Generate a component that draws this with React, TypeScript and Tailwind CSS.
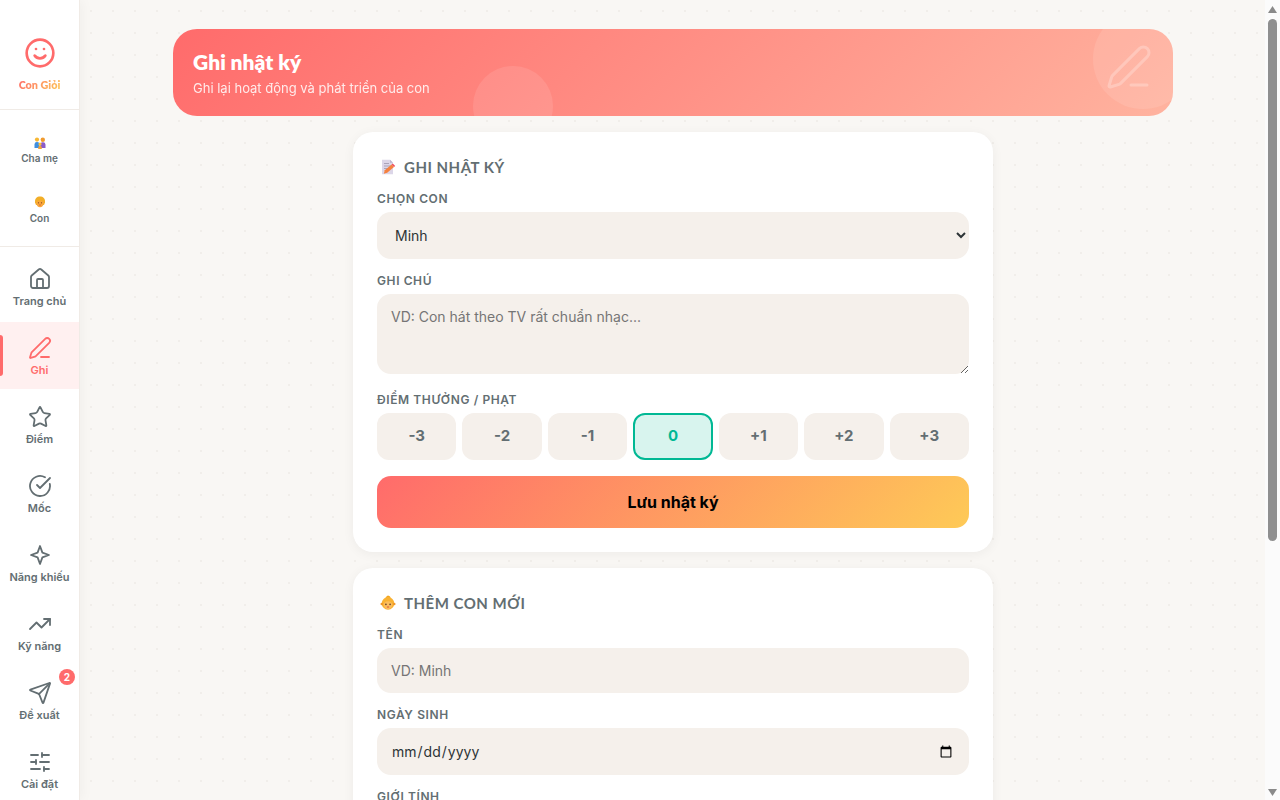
import { CircleCheckBig, House, PenLine, Send, SlidersHorizontal, Smile, Star, TrendingUp } from "lucide-react";
import type { ComponentType, ReactNode } from "react";

type IconProps = { size?: number; strokeWidth?: number };

/* lucide's sparkle is wider than the one in the picture */
function FourPointStar({ size = 24, strokeWidth = 2 }: IconProps) {
  return (
    <svg width={size} height={size} viewBox="0 0 24 24" fill="none" stroke="currentColor" strokeWidth={strokeWidth} strokeLinejoin="round">
      <path d="M12 3l2.400 6.600L21 12l-6.600 2.400L12 21l-2.400-6.600L3 12l6.600-2.400Z" />
    </svg>
  );
}

const navItems: { label: string; icon: ComponentType<IconProps>; active?: boolean; badge?: number }[] = [
  { label: "Trang chủ", icon: House },
  { label: "Ghi", icon: PenLine, active: true },
  { label: "Điểm", icon: Star },
  { label: "Mốc", icon: CircleCheckBig },
  { label: "Năng khiếu", icon: FourPointStar },
  { label: "Kỹ năng", icon: TrendingUp },
  { label: "Đề xuất", icon: Send, badge: 2 },
  { label: "Cài đặt", icon: SlidersHorizontal },
];

const points = ["-3", "-2", "-1", "0", "+1", "+2", "+3"];

const heading = "font-['Lato','Noto_Sans',sans-serif]";
const fieldLabel = "mb-1.5 block text-[12px] leading-[15px] font-semibold tracking-[0.6px] text-[#636e72] uppercase";
const field = "w-full rounded-[14px] bg-[#f5f0eb] px-[14px] text-[14px] text-[#2d3436] outline-none placeholder:text-[#757575]";
const primaryButton = "mt-4 h-[52px] w-full rounded-[14px] bg-[linear-gradient(135deg,#ff6b6b,#feca57)] text-[16px] font-bold text-black";

/* emoji in the reference are a colour set we don't have, so small drawings */
function FamilyEmoji() {
  return (
    <svg width="12" height="12" viewBox="0 0 12 12">
      <circle cx="3" cy="2.600" r="2.100" fill="#f7b733" />
      <path d="M.5 11V7.200A2.400 2.400 0 0 1 3 5a2.400 2.400 0 0 1 2.500 2.200V11Z" fill="#3f8fe0" />
      <circle cx="8.800" cy="2.800" r="2.200" fill="#f09a2e" />
      <path d="M6.200 11V7.400A2.500 2.500 0 0 1 8.800 5.200a2.500 2.500 0 0 1 2.700 2.200V11Z" fill="#8a5cc9" />
      <circle cx="6" cy="7" r="1.600" fill="#f9c23c" />
      <path d="M4.200 12V10.400A1.800 1.800 0 0 1 6 8.800a1.800 1.800 0 0 1 1.800 1.600V12Z" fill="#f0a13a" />
    </svg>
  );
}

function ChildEmoji() {
  return (
    <svg width="12" height="12" viewBox="0 0 12 12">
      <path d="M1 6.500C.6 2.600 3 .6 6 .6s5.400 2 5 5.900L10 9H2Z" fill="#f2ae27" />
      <path d="M2.500 5.500c1.500 0 2.500-.5 3.500-1.500 1 1 2 1.500 3.500 1.500v1.800C9.500 9.800 8 11.300 6 11.300S2.500 9.800 2.500 7.300Z" fill="#f9a63c" />
      <circle cx="4.500" cy="6.800" r=".6" fill="#7a3f1d" />
      <circle cx="7.500" cy="6.800" r=".6" fill="#7a3f1d" />
      <path d="M5 9h2" stroke="#d6552d" strokeWidth=".7" />
    </svg>
  );
}

function MemoEmoji() {
  return (
    <svg width="16" height="16" viewBox="0 0 16 16">
      <path d="M2 .8h8l3 3v11.400H2Z" fill="#dcd6e8" />
      <path d="M10 .8l3 3h-3Z" fill="#bdb5cf" />
      <path d="M4 4.500h5M4 7h7M4 9.500h4" stroke="#a49db3" strokeWidth=".9" />
      <path d="M4.800 11.200 11.600 5.400l2.400 2.600-6.800 5.800-3.400.9Z" fill="#f5813f" />
      <path d="M11.600 5.400l1.200-1 2.400 2.600-1.200 1Z" fill="#ef4f5f" />
    </svg>
  );
}

function BabyEmoji() {
  return (
    <svg width="16" height="16" viewBox="0 0 16 16">
      <path d="M8 .5c2 .6 2.500 1.500 2.400 2.500H5.800C5.900 2 6.600 1 8 .5Z" fill="#f2a51f" />
      <circle cx="8" cy="8.400" r="6.300" fill="#f9b233" />
      <circle cx="1.800" cy="9" r="1.300" fill="#f0972b" />
      <circle cx="14.200" cy="9" r="1.300" fill="#f0972b" />
      <path d="M3.700 9.500c0-2 2-3.300 4.300-3.300s4.300 1.300 4.300 3.300c0 2.600-2 4.600-4.300 4.600S3.700 12.100 3.700 9.500Z" fill="#fbbd5e" />
      <circle cx="5.900" cy="9.400" r=".8" fill="#5f3a25" />
      <circle cx="10.100" cy="9.400" r=".8" fill="#5f3a25" />
      <path d="M6.900 12h2.200" stroke="#d9543a" strokeWidth="1" />
    </svg>
  );
}

function Sidebar() {
  return (
    <aside className="z-10 flex h-screen w-20 shrink-0 flex-col overflow-hidden border-r border-[#f0ebe6] bg-white shadow-[2px_0_12px_rgba(0,0,0,0.04)]">
      <div className="flex h-[110px] shrink-0 flex-col items-center border-b border-[#f0ebe6] pt-[37px]">
        <Smile size={32} strokeWidth={2} className="text-[#ff6b6b]" />
        <span className={`mt-[9px] bg-[linear-gradient(135deg,#ff6b6b,#feca57)] bg-clip-text text-[10.800px] leading-[14px] font-extrabold text-transparent ${heading}`}>
          Con Giỏi
        </span>
      </div>
      <div className="flex h-[137px] shrink-0 flex-col items-center border-b border-[#f0ebe6] pt-[27px] text-[10px] font-semibold text-[#636e72]">
        <FamilyEmoji />
        <span className="mt-[2px] leading-[14px]">Cha mẹ</span>
        <span className="mt-[31px]">
          <ChildEmoji />
        </span>
        <span className="mt-[3px] leading-[14px]">Con</span>
      </div>
      <nav className="flex flex-col gap-[2px] pt-[6px]">
        {navItems.map((item) => {
          const Icon = item.icon;
          return (
            <div
              key={item.label}
              className={`relative flex h-[67px] shrink-0 flex-col items-center gap-[3px] pt-[14px] text-[11px] leading-[14px] font-semibold ${
                item.active ? "bg-[#fff0f0] text-[#ff6b6b]" : "text-[#636e72]"
              }`}
            >
              {item.active && <span className="absolute top-[13px] bottom-[13px] left-0 w-[3px] rounded-r-[3px] bg-[#ff6b6b]" />}
              <Icon size={24} strokeWidth={1.8} />
              <span>{item.label}</span>
              {item.badge && (
                <span className="absolute top-[2px] right-[4px] flex size-4 items-center justify-center rounded-full bg-[#ff6b6b] text-[10px] leading-none font-bold text-white">
                  {item.badge}
                </span>
              )}
            </div>
          );
        })}
      </nav>
    </aside>
  );
}

function Banner() {
  return (
    <header className="relative h-[87px] w-[1000px] shrink-0 overflow-hidden rounded-[24px] bg-[linear-gradient(135deg,#ff6b6b,#ffb39f)] px-5 pt-[19px] text-white">
      <span className="absolute -top-5 -right-5 size-[100px] rounded-full bg-white/10" />
      <span className="absolute -bottom-[30px] left-[300px] size-20 rounded-full bg-white/10" />
      <PenLine size={48} strokeWidth={1.5} className="absolute top-[14px] right-5 opacity-25" />
      <h1 className={`text-[21px] leading-[27px] font-extrabold ${heading}`}>Ghi nhật ký</h1>
      <p className="mt-[5px] text-[13px] leading-[16px] opacity-85">Ghi lại hoạt động và phát triển của con</p>
    </header>
  );
}

function CardTitle({ emoji, text }: { emoji: ReactNode; text: string }) {
  return (
    <h2 className={`mb-[14px] flex items-center gap-2 pl-[3px] text-[15px] leading-[20px] font-bold tracking-[0.5px] text-[#636e72] uppercase ${heading}`}>
      {emoji}
      {text}
    </h2>
  );
}

function LogForm() {
  return (
    <section className="w-[640px] shrink-0 rounded-[20px] bg-white p-6 pt-[25px] shadow-[0_2px_12px_rgba(0,0,0,0.05)]">
      <CardTitle emoji={<MemoEmoji />} text="Ghi nhật ký" />
      <label className={fieldLabel}>Chọn con</label>
      <select className={`${field} block h-[47px]`} defaultValue="Minh">
        <option>Minh</option>
      </select>
      <label className={`${fieldLabel} mt-[14px]`}>Ghi chú</label>
      <textarea className={`${field} block h-[80px] py-[14px] leading-[18px]`} placeholder="VD: Con hát theo TV rất chuẩn nhạc..." />
      <label className={`${fieldLabel} mt-[18px]`}>Điểm thưởng / phạt</label>
      <div className="flex gap-[6px]">
        {points.map((p) => (
          <button
            key={p}
            className={`h-[47px] flex-1 rounded-[12px] border-2 text-[15px] font-bold ${
              p === "0" ? "border-[#00b894] bg-[#d8f4ee] text-[#00b894]" : "border-transparent bg-[#f5f0eb] text-[#636e72]"
            }`}
          >
            {p}
          </button>
        ))}
      </div>
      <button className={primaryButton}>Lưu nhật ký</button>
    </section>
  );
}

function AddChildForm() {
  return (
    <section className="w-[640px] shrink-0 rounded-[20px] bg-white p-6 pt-[25px] shadow-[0_2px_12px_rgba(0,0,0,0.05)]">
      <CardTitle emoji={<BabyEmoji />} text="Thêm con mới" />
      <label className={fieldLabel}>Tên</label>
      <input className={`${field} block h-[45px]`} placeholder="VD: Minh" />
      <label className={`${fieldLabel} mt-[14px]`}>Ngày sinh</label>
      <input type="date" className={`${field} block h-[47px]`} />
      <label className={`${fieldLabel} mt-[14px]`}>Giới tính</label>
      <select className={`${field} block h-[47px]`}>
        <option>Nam</option>
        <option>Nữ</option>
      </select>
      <button className={primaryButton}>Thêm con</button>
    </section>
  );
}

function Scrollbar() {
  return (
    <div className="flex h-screen w-[15px] shrink-0 flex-col items-center bg-[#fbfbfb] pt-[6px]">
      <svg width="9" height="7" viewBox="0 0 9 7" className="shrink-0">
        <path d="M4.500 0 9 7H0Z" fill="#8a8a8a" />
      </svg>
      <div className="mt-[6px] h-[522px] w-[9px] shrink-0 rounded-full bg-[#8f8f8f]" />
      <svg width="9" height="7" viewBox="0 0 9 7" className="mt-auto mb-[4px] shrink-0">
        <path d="M0 0h9L4.500 7Z" fill="#8a8a8a" />
      </svg>
    </div>
  );
}

export default function App() {
  return (
    <div className="flex h-screen overflow-hidden bg-[#f9f7f4] font-['Inter',sans-serif]">
      <Sidebar />
      <main className="flex flex-1 flex-col items-center gap-4 overflow-y-auto bg-[radial-gradient(circle,#f1eeea_1px,transparent_1px)] bg-[size:22px_22px] pt-[29px] pb-8 pl-px">
        <Banner />
        <LogForm />
        <AddChildForm />
      </main>
      <Scrollbar />
    </div>
  );
}
